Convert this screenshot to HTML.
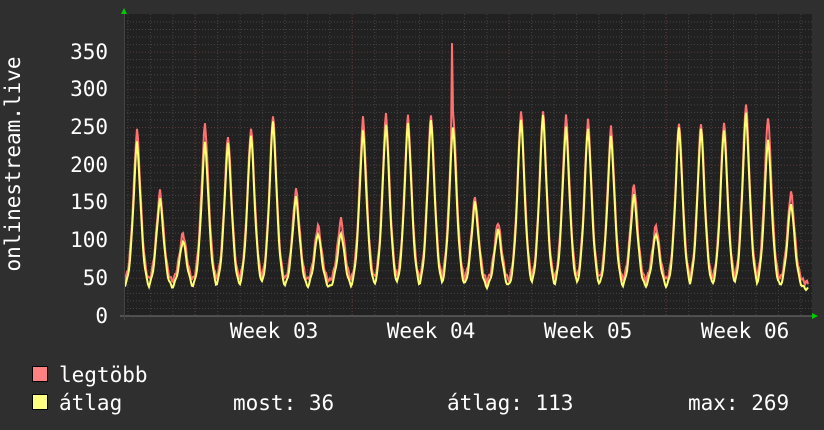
<!DOCTYPE html>
<html><head><meta charset="utf-8"><style>
html,body{margin:0;padding:0;background:#2f2f2f;width:824px;height:430px;overflow:hidden}
svg{display:block}
text{font-family:"DejaVu Sans Mono","Liberation Mono",monospace;fill:#fff;font-size:21px}
</style></head><body>
<svg id="s" width="824" height="430" xmlns="http://www.w3.org/2000/svg">
<rect x="124" y="14" width="688" height="302" fill="#212121"/>
<g id="grid"></g>
<path id="mx" fill="none" stroke="#ff7070" stroke-width="2"/>
<path id="av" fill="none" stroke="#ffff70" stroke-width="2"/>
<line x1="120" y1="316" x2="814" y2="316" stroke="#777" stroke-width="1"/>
<line x1="124.5" y1="12" x2="124.5" y2="320" stroke="#444" stroke-width="1"/>
<polygon points="121,14 127,14 124,8" fill="#0c0"/>
<polygon points="812,313 812,319 818,316" fill="#0c0"/>
<g text-anchor="end">
<text x="108" y="323">0</text><text x="108" y="285">50</text><text x="108" y="247">100</text>
<text x="108" y="209">150</text><text x="108" y="172">200</text><text x="108" y="134">250</text>
<text x="108" y="96">300</text><text x="108" y="59">350</text>
</g>
<text transform="translate(20,164) rotate(-90)" text-anchor="middle">onlinestream.live</text>
<g text-anchor="middle">
<text x="274" y="338">Week 03</text><text x="431" y="338">Week 04</text>
<text x="588" y="338">Week 05</text><text x="745" y="338">Week 06</text>
</g>
<rect x="32.5" y="366.5" width="15" height="15" fill="#ff8080" stroke="#000"/>
<rect x="32.5" y="394.5" width="15" height="15" fill="#ffff80" stroke="#000"/>
<text x="59" y="382">legtöbb</text>
<text x="59" y="410">átlag</text>
<text x="233" y="410">most: 36</text>
<text x="447" y="410">átlag: 113</text>
<text x="688" y="410">max: 269</text>
</svg>
<script>
var g=document.getElementById('grid'),h='';
for(var v=10;v<=390;v+=10){var y=316-v*0.754;if(y<14)break;
 h+='<line x1="124" x2="812" y1="'+y.toFixed(1)+'" y2="'+y.toFixed(1)+'" stroke="'+(v%50==0?'#5a3a3a':'#444')+'" stroke-dasharray="1,2"/>';}
for(var x=128;x<812;x+=22.43){h+='<line y1="14" y2="316" x1="'+x.toFixed(1)+'" x2="'+x.toFixed(1)+'" stroke="#444" stroke-dasharray="1,2"/>';}
[195,352,509,666].forEach(function(x){h+='<line y1="14" y2="316" x1="'+x+'" x2="'+x+'" stroke="#6a3030" stroke-dasharray="1,2"/>';});
g.innerHTML=h;
var pk=[[137,247,230],[160,165,155],[183,110,100],[205,255,230],[228,240,228],[251,250,240],[273,267,258],[296,168,157],[318,120,110],[341,128,110],[363,262,245],[386,268,255],[408,265,255],[431,268,258],[453,272,252],[475,158,150],[498,125,115],[521,272,262],[543,273,265],[566,265,250],[588,260,250],[611,250,238],[634,175,160],[656,120,110],[679,258,250],[701,257,248],[724,258,248],[746,283,268],[768,265,235],[791,165,150]];
function val(x,k){var base=k==1?44:36;var best=0;
 for(var i=0;i<pk.length;i++){var d=Math.abs(x-pk[i][0])/4.2;var f=Math.exp(-Math.pow(d,1.6)*0.7);var b=(pk[i][k]-base)*f;if(b>best)best=b;}
 return base+best+(k==1?Math.sin(x*1.7)*3:Math.sin(x*1.3)*2);}
['mx','av'].forEach(function(id,j){var k=j==0?1:2,d='';
 for(var x=125;x<=808;x++){var v=val(x,k);if(id=='mx'&&(x==452))v=362;d+=(x==125?'M':'L')+x+','+(316-v*0.754).toFixed(1);}
 document.getElementById(id).setAttribute('d',d);});
</script>
</body></html>
